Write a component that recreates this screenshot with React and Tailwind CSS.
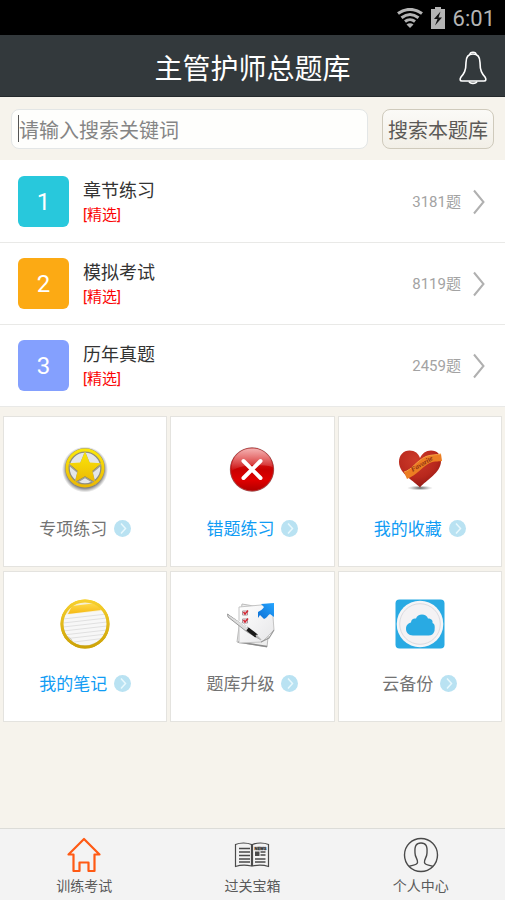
import React from 'react';

const rows = [
  { n: 1, title: '章节练习', count: 3181, color: 'bg-[#28c8dc]' },
  { n: 2, title: '模拟考试', count: 8119, color: 'bg-[#fcaa14]' },
  { n: 3, title: '历年真题', count: 2459, color: 'bg-[#84a0fe]' },
];

function StarIcon() {
  return (
    <svg width="50" height="50" viewBox="0 0 50 50" aria-hidden="true">
      <defs>
        <linearGradient id="starGold" x1="0" y1="0" x2="0" y2="1">
          <stop offset="0" stopColor="#fbe70a" />
          <stop offset="1" stopColor="#ecb904" />
        </linearGradient>
        <radialGradient id="starShade">
          <stop offset="0.8" stopColor="#444" stopOpacity="0.7" />
          <stop offset="1" stopColor="#666" stopOpacity="0" />
        </radialGradient>
      </defs>
      <circle cx="25" cy="25.500" r="23" fill="url(#starShade)" />
      <circle cx="25" cy="24.500" r="17" fill="#e4e6ea" />
      <circle cx="25" cy="24" r="17.500" fill="none" stroke="#8f8c7c" strokeWidth="4.500" />
      <path d="M25 9l4.400 10.900 11.700.900-9 7.600 2.800 11L25 33.400l-9.900 6 2.800-11-9-7.600 11.700-.900z" fill="#76735f" stroke="#a3a091" strokeWidth="1.500" />
      <circle cx="25" cy="24" r="18" fill="none" stroke="url(#starGold)" strokeWidth="3" />
      <path d="M25 7.500l4.600 10.900 11.700.900-9 7.600 2.800 11.400L25 32.200l-10.100 6.100 2.800-11.400-9-7.600 11.700-.900z" fill="url(#starGold)" />
    </svg>
  );
}

function CrossIcon() {
  return (
    <svg width="50" height="50" viewBox="0 0 50 50" aria-hidden="true">
      <defs>
        <linearGradient id="redBall" x1="0" y1="0" x2="0" y2="1">
          <stop offset="0" stopColor="#e43b3b" />
          <stop offset="0.5" stopColor="#c90000" />
          <stop offset="0.75" stopColor="#df0000" />
          <stop offset="1" stopColor="#b00000" />
        </linearGradient>
        <linearGradient id="redGloss" x1="0" y1="0" x2="0" y2="1">
          <stop offset="0" stopColor="#fff" stopOpacity="0.6" />
          <stop offset="1" stopColor="#fff" stopOpacity="0.04" />
        </linearGradient>
      </defs>
      <circle cx="25" cy="25.500" r="22.300" fill="#999" opacity="0.6" />
      <circle cx="25" cy="25.500" r="21.500" fill="url(#redBall)" stroke="#b03030" strokeWidth="1" />
      <path d="M4.500 24C5 12 14 4.500 25 4.500S45 12 45.500 23C34 20 15 20 4.500 27z" fill="url(#redGloss)" />
      <path d="M16.500 17l17 17M33.500 17l-17 17" stroke="#fff" strokeWidth="4" strokeLinecap="round" />
    </svg>
  );
}

function HeartIcon() {
  return (
    <svg width="50" height="50" viewBox="0 0 50 50" aria-hidden="true">
      <defs>
        <radialGradient id="heartRed" cx="0.4" cy="0.25" r="0.8">
          <stop offset="0" stopColor="#cc3a29" />
          <stop offset="0.6" stopColor="#b8281d" />
          <stop offset="1" stopColor="#8d1512" />
        </radialGradient>
        <radialGradient id="heartShadow">
          <stop offset="0" stopColor="#555" />
          <stop offset="1" stopColor="#999" stopOpacity="0" />
        </radialGradient>
      </defs>
      <ellipse cx="25" cy="44" rx="13" ry="2.500" fill="url(#heartShadow)" />
      <path d="M25 43.500C20 37.500 4 30 4 18C4 11 8.500 6.500 14.500 6.500c5.500 0 9 3 10.500 7.500C27 9.500 31 6.500 36 6.500c6 0 10 4 10 10.500C46 29 31 36 25 43.500z" fill="url(#heartRed)" />
      <path d="M9 28C17 26 21 17 31 12.500C36 10.500 42 11 46 10L47 17C43 17.500 38 17 33 20C26 24 22 31 12 35z" fill="#ec7d22" />
      <path d="M9 28C17 26 21 17 31 12.500C36 10.500 42 11 46 10" fill="none" stroke="#f4a145" strokeWidth="1" />
      <text x="17.500" y="28" transform="rotate(-31 17.500 28)" fontFamily="Liberation Serif, serif" fontStyle="italic" fontWeight="700" fontSize="7" fill="#8b2c12">Favorite</text>
    </svg>
  );
}

function NoteIcon() {
  return (
    <svg width="50" height="50" viewBox="0 0 50 50" aria-hidden="true">
      <defs>
        <linearGradient id="noteRing" x1="0" y1="0" x2="0" y2="1">
          <stop offset="0" stopColor="#f6cf2c" />
          <stop offset="1" stopColor="#cda308" />
        </linearGradient>
        <linearGradient id="noteTop" x1="0" y1="0" x2="0" y2="1">
          <stop offset="0" stopColor="#ffda4a" />
          <stop offset="1" stopColor="#f5b914" />
        </linearGradient>
        <clipPath id="noteClip"><circle cx="25" cy="25" r="22" /></clipPath>
      </defs>
      <circle cx="25" cy="25" r="24.500" fill="url(#noteRing)" />
      <circle cx="25" cy="25" r="22" fill="#f7f7f7" />
      <g clipPath="url(#noteClip)">
        <path d="M0 0h50v11L8 15.500 0 14z" fill="#f7efd0" />
        <path d="M12 7l25-3 4 7L8 15z" fill="url(#noteTop)" />
        <path d="M3 20l44-5M3 24l44-5M3 28l44-5M3 32l44-5M3 36l44-5M3 40l44-5M6 44l40-5" stroke="#e0e0e0" strokeWidth="1" />
        <path d="M4 35l7 5 3 6 14 1 15-6 3-5" fill="none" stroke="#ccc8b8" strokeWidth="1" />
      </g>
      <circle cx="25" cy="25" r="23" fill="none" stroke="url(#noteRing)" strokeWidth="3" />
    </svg>
  );
}

function UpgradeIcon() {
  return (
    <svg width="50" height="50" viewBox="0 0 50 50" aria-hidden="true">
      <defs>
        <linearGradient id="paperFill" x1="0" y1="0" x2="1" y2="1">
          <stop offset="0" stopColor="#fff" />
          <stop offset="1" stopColor="#e6e6e8" />
        </linearGradient>
        <linearGradient id="arrowBlue" x1="0" y1="1" x2="1" y2="0">
          <stop offset="0" stopColor="#0d6fd4" />
          <stop offset="1" stopColor="#25a5ff" />
        </linearGradient>
      </defs>
      <path d="M15 5l29 5-4 38-30-5z" fill="#eee" stroke="#bbb" strokeWidth="1" />
      <path d="M11 43l29 4.500" stroke="#8a8a8a" strokeWidth="1.500" />
      <path d="M12 8l33-3 2 26-12 12-23 1z" fill="url(#paperFill)" stroke="#c4c4c4" strokeWidth="1" />
      <path d="M47 31l-5 8-8 4" fill="none" stroke="#999" strokeWidth="1.200" />
      <path d="M15.500 12h5v4h-5zM15.500 20h5v4h-5z" fill="#fff" stroke="#a9959b" strokeWidth="1" />
      <path d="M16.500 13l1.500 2 3-3.500M16.500 21l1.500 2 3-3.500" fill="none" stroke="#d32734" strokeWidth="1.600" />
      <path d="M34 5l13-1v14l-4-3c-2 1-3 4-6 5l-4-4-2 3v-6c2-1 5-3 6-5z" fill="url(#arrowBlue)" />
      <path d="M.500 15l20 13 12 12-13-7.500L1 18z" fill="#ddd" stroke="#999" strokeWidth="1" />
      <path d="M2 15l18 13" stroke="#fff" strokeWidth="1" />
      <path d="M20.500 30l9 7" stroke="#1a1a1a" strokeWidth="4" />
      <path d="M29 36l5 5" stroke="#bbb" strokeWidth="1.500" />
    </svg>
  );
}

function CloudIcon() {
  return (
    <svg width="50" height="50" viewBox="0 0 50 50" aria-hidden="true">
      <rect x="0.500" y="0.500" width="49" height="49" rx="4" fill="#29aae3" />
      <circle cx="25" cy="25" r="23.300" fill="#f5f5f7" />
      <circle cx="25" cy="25" r="20.300" fill="#f4f2f4" stroke="#dcdbe0" strokeWidth="1" />
      <path d="M18 36.500c-4.500 0-7-3-7-6.500 0-4 2.500-6 5-6.500 0-3.500 3-4.500 5-4 1.500-5.500 10.500-5.500 12 0 4 0 5 2.500 4.500 4.500 2.500 1 2.500 3.500 2 8-1 3-3 4.500-6 4.500z" fill="#29aae3" />
    </svg>
  );
}

const cards = [
  { label: '专项练习', Icon: StarIcon, color: 'text-[#737373]' },
  { label: '错题练习', Icon: CrossIcon, color: 'text-[#109cf4]' },
  { label: '我的收藏', Icon: HeartIcon, color: 'text-[#109cf4]' },
  { label: '我的笔记', Icon: NoteIcon, color: 'text-[#109cf4]' },
  { label: '题库升级', Icon: UpgradeIcon, color: 'text-[#737373]' },
  { label: '云备份', Icon: CloudIcon, color: 'text-[#737373]' },
];

function HomeIcon() {
  return (
    <svg width="36" height="36" viewBox="0 0 36 36" fill="none" stroke="#ff5a14" strokeWidth="2.200" aria-hidden="true">
      <path d="M18 2L2.500 17.500H7.500V34H13.500V25.500H22.500V34H28.500V17.500H33.500Z" strokeLinejoin="round" />
    </svg>
  );
}

function NewsIcon() {
  return (
    <svg width="36" height="36" viewBox="0 0 36 36" fill="none" stroke="#4a4a4a" aria-hidden="true">
      <path d="M1.500 7.500C6 5.500 13 5.500 17.500 7.500V29C13 28 6 28 1.500 29.500ZM18.500 7.500C23 5.500 30 5.500 34.500 7.500V29.500C30 28 23 28 18.500 29Z" strokeWidth="1.200" />
      <path d="M18 8v21" strokeWidth="2" />
      <path d="M5 11.500h11M5 15h11M5 18.500h11M5 22h11M5 25h11M26.500 15h5M26.500 18h5M21 22h10.500M21 25h10.500" strokeWidth="1.500" />
      <path d="M21 14.500h4.500V19H21z" fill="#4a4a4a" stroke="none" />
      <text x="20.500" y="12.500" fontFamily="Liberation Sans, sans-serif" fontWeight="700" fontSize="4" fill="#333" stroke="#333" strokeWidth="0.300">NEWS</text>
    </svg>
  );
}

function PersonIcon() {
  return (
    <svg width="36" height="36" viewBox="0 0 36 36" fill="none" stroke="#4a4a4a" strokeWidth="1.400" aria-hidden="true">
      <circle cx="18" cy="18" r="16.500" />
      <path d="M6 29.500C10 28 14.500 28 14.500 25.500C15 22 12 20.500 12 16C11.500 9 13 6 18 6S24.500 9 24 16C24 20.500 21 22 21.500 25.500C21.500 28 26 28 30 29.500" />
    </svg>
  );
}

const tabs = [
  { label: '训练考试', Icon: HomeIcon },
  { label: '过关宝箱', Icon: NewsIcon },
  { label: '个人中心', Icon: PersonIcon },
];

export default function App() {
  return (
    <div className="flex min-h-screen flex-col bg-[#f6f3ec] font-[Roboto,'Noto_Sans_CJK_SC',sans-serif]">
      <div className="flex h-[35px] items-center justify-end gap-2 bg-black pr-2.5 text-[#b4b4b4]">
        <svg width="26" height="20" viewBox="0 0 26 20" fill="none" stroke="currentColor" strokeWidth="3" aria-hidden="true">
          <path d="M1 5.500C8 0 18 0 25 5.500" />
          <path d="M4.500 9.700C10 5.500 16 5.500 21.500 9.700" />
          <path d="M8 13.500C11 11 15 11 18 13.500" />
          <path d="M9.500 16.500C11.500 14.700 14.500 14.700 16.500 16.500L13 20Z" fill="currentColor" stroke="none" />
        </svg>
        <svg width="14" height="22" viewBox="0 0 14 22" aria-hidden="true">
          <path d="M4 0h6v2h4v20H0V2h4z" fill="currentColor" />
          <path d="M9.500 4.500L3 12h3.500L4 18.500 11 10.500H7.500z" fill="#111" />
        </svg>
        <span className="pt-0.5 text-[22px] leading-none">6:01</span>
      </div>

      <header className="grid h-[62px] grid-cols-[1fr_auto_1fr] items-center border-b border-[#24292c] bg-[#33393c] px-[18px] pt-1">
        <h1 className="col-start-2 pt-1 text-[28px] leading-10 text-white">主管护师总题库</h1>
        <button type="button" aria-label="通知" className="justify-self-end">
          <svg width="28" height="34" viewBox="0 0 28 34" fill="none" stroke="#fff" strokeWidth="1.600" strokeLinejoin="round" aria-hidden="true">
            <path d="M11 3.500C11 .500 17 .500 17 3.500" />
            <path d="M14 3C8.500 3 7 7.500 7 11.500C7 20 5 22.500 2 26C.500 28.500 1 30 3 30H25C27 30 27.500 28.500 26 26C23 22.500 21 20 21 11.500C21 7.500 19.500 3 14 3Z" />
            <path d="M10 30.500C11 33 17 33 18 30.500" />
          </svg>
        </button>
      </header>

      <form className="flex h-[63px] items-center gap-3.5 px-[11px]" onSubmit={(e) => e.preventDefault()}>
        <div className="flex h-10 min-w-0 flex-1 items-center rounded-lg border border-[#e3e6e6] bg-[#fefefc] px-1.5">
          <span className="h-[27px] w-px shrink-0 bg-[#555]" />
          <input
            type="text"
            aria-label="搜索关键词"
            placeholder="请输入搜索关键词"
            className="h-full min-w-0 flex-1 bg-transparent pt-1 text-[20px] text-[#555] outline-none placeholder:text-[#858585]"
          />
        </div>
        <button type="submit" className="h-10 w-28 rounded-lg border border-[#cfcabc] bg-linear-to-b from-[#fbfaf7] to-[#f2efe7] pt-1 text-[20px] leading-none whitespace-nowrap text-[#5c5a57]">
          搜索本题库
        </button>
      </form>

      <ul className="bg-white pt-px">
        {rows.map((r) => (
          <li key={r.n} className="border-b border-[#e9e9e7]">
            <a href="#" className="flex h-[81px] items-center pr-5 pl-[18px]">
              <span className={`flex size-[51px] items-center justify-center rounded-md text-[24px] text-white ${r.color}`}>{r.n}</span>
              <span className="ml-3.5 flex flex-1 flex-col pt-0.5">
                <span className="text-[18px] leading-6 text-[#333]">{r.title}</span>
                <span className="text-[15px] leading-6 text-[#fb0404]">[精选]</span>
              </span>
              <span className="mr-3 pt-0.5 text-[15px] text-[#a3a3a3]">{r.count}题</span>
              <svg width="12" height="26" viewBox="0 0 12 26" fill="none" stroke="#b0b0b0" strokeWidth="2" aria-hidden="true">
                <path d="M1 1.500L10.500 13L1 24.500" />
              </svg>
            </a>
          </li>
        ))}
      </ul>

      <div className="grid grid-cols-3 gap-x-[3px] gap-y-1 px-[3px] pt-[9px] pb-4">
        {cards.map(({ label, Icon, color }) => (
          <a key={label} href="#" className="flex h-[151px] flex-col items-center border border-[#e4e3df] bg-white pt-[27px]">
            <Icon />
            <span className={`mt-[21px] flex items-center gap-[7px] text-[17px] leading-6 ${color}`}>
              <span className="pt-0.5">{label}</span>
              <svg width="17" height="17" viewBox="0 0 17 17" aria-hidden="true">
                <circle cx="8.500" cy="8.500" r="8.500" fill="#b9e2f2" />
                <path d="M7 3.500L11.500 8.500L7 13.500" fill="none" stroke="#e8f8fd" strokeWidth="1.500" />
              </svg>
            </span>
          </a>
        ))}
      </div>

      <nav className="mt-auto grid h-[72px] grid-cols-3 border-t border-[#dcdcd8] bg-[#f3f3f3]">
        {tabs.map(({ label, Icon }) => (
          <a key={label} href="#" className="flex flex-col items-center pt-2 text-[14px] leading-6 text-[#5a5a5a]">
            <Icon />
            <span className="pt-px">{label}</span>
          </a>
        ))}
      </nav>
    </div>
  );
}
